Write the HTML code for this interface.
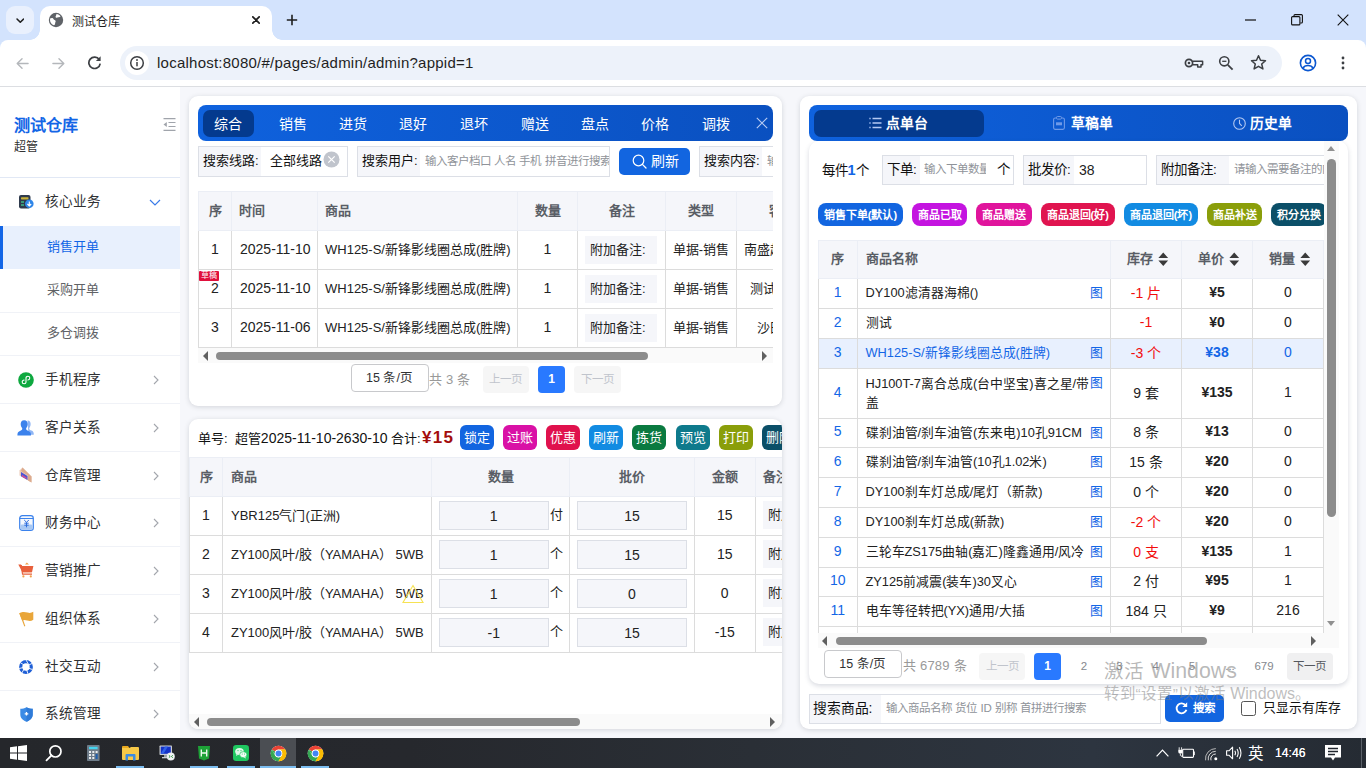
<!DOCTYPE html>
<html lang="zh-CN">
<head>
<meta charset="utf-8">
<title>测试仓库</title>
<style>
*{box-sizing:border-box;margin:0;padding:0}
html,body{width:1366px;height:768px;overflow:hidden}
body{font-family:"Liberation Sans",sans-serif;font-size:14px;color:#222;background:#f6f7fb;position:relative}
.abs{position:absolute}
svg{display:block}
/* ---------- browser chrome ---------- */
#tabstrip{position:absolute;left:0;top:0;width:1366px;height:50px;background:#d3e3fd}
#tabsearch{position:absolute;left:6px;top:6px;width:28px;height:28px;border-radius:9px;background:#e9f0fd}
#tab{position:absolute;left:40px;top:6px;width:232px;height:34px;background:#fff;border-radius:10px 10px 0 0}
#tab:before,#tab:after{content:"";position:absolute;bottom:0;width:10px;height:10px;background:radial-gradient(circle at 0 0,rgba(255,255,255,0) 9.5px,#fff 10px)}
#tab:before{left:-10px}
#tab:after{right:-10px;background:radial-gradient(circle at 100% 0,rgba(255,255,255,0) 9.5px,#fff 10px)}
#tabtitle{position:absolute;left:72px;top:13.500px;font-size:12px;color:#1f1f1f;line-height:16px;white-space:nowrap}
#toolbar{position:absolute;left:0;top:40px;width:1366px;height:47px;background:#fff;border-bottom:1px solid #dcdee2;border-radius:8px 8px 0 0}
#omni{position:absolute;left:120px;top:46px;width:1162px;height:34px;border-radius:17px;background:#edf2fa}
#omniicon{position:absolute;left:124.800px;top:51px;width:24px;height:24px;border-radius:12px;background:#fff}
#url{position:absolute;left:157px;top:53px;font-size:15px;color:#1f1f1f;line-height:20px;white-space:nowrap;letter-spacing:0.240px}
/* ---------- sidebar ---------- */
#side{position:absolute;left:0;top:87px;width:180px;height:651px;background:#fff}
#side .logo{position:absolute;left:14px;top:28px;font-size:16.100px;font-weight:bold;color:#1366e6;line-height:20px;white-space:nowrap}
#side .sub{position:absolute;left:14px;top:53px;font-size:12px;color:#333;line-height:14px}
#side .hr{position:absolute;left:0;width:180px;height:1px;background:#f0f2f7}
.mi{position:absolute;left:45px;font-size:13.600px;color:#303133;line-height:20px;white-space:nowrap}
.smi{position:absolute;left:47px;font-size:13px;color:#606266;line-height:20px;white-space:nowrap}
.chev{position:absolute;left:152px;width:8px;height:10px}
/* ---------- panels ---------- */
.panel{position:absolute;background:#fff;border-radius:9px;box-shadow:0 1px 5px rgba(40,45,60,.17)}
.bluebar{position:absolute;height:36px;border-radius:8px;background:linear-gradient(90deg,#0f62de,#0a50c0)}
.tabact{position:absolute;top:5px;height:27px;border-radius:7px;background:#043a8e}
.tl{position:absolute;top:0;height:36px;line-height:38.500px;font-size:14px;color:#fff;white-space:nowrap;transform:translateX(-50%)}

/* ---------- generic widgets ---------- */
.sbox{position:absolute;height:31px;border:1px solid #dcdfe6;background:#fff;overflow:hidden;white-space:nowrap}
.sbox .lb{position:absolute;left:0;top:0;height:29px;background:#f5f6fa;font-size:13px;color:#111;line-height:28px;padding-left:4px}
.sbox .ph{position:absolute;top:0;height:29px;line-height:28px;font-size:11.500px;color:#8f9399}
.btn{position:absolute;border-radius:5px;background:#1265e0;color:#fff;white-space:nowrap}
table{border-collapse:collapse;table-layout:fixed}
.tb{position:absolute;overflow:hidden}
.tb td,.tb th{border:1px solid #dcdcdc;font-weight:normal;white-space:nowrap;overflow:hidden;padding:0 0 3px 0}
.n{font-size:14px}
.tb th{background:#f5f6fa;color:#5a5e66;font-weight:bold;border-color:#ebeef5}
.hsb{position:absolute;height:15px;background:#fafafa}
.hsb i{position:absolute;top:3.500px;height:8.500px;border-radius:4.500px;background:#8c8c8c}
.hsb b{position:absolute;top:2.500px;width:0;height:0;border:5px solid transparent}
.hsb b.l{border-right:5px solid #606060;border-left:0}
.hsb b.r{border-left:5px solid #606060;border-right:0}
.pg{position:absolute;height:27px;line-height:27px;border-radius:4px;text-align:center;font-size:11.500px;white-space:nowrap}
.pg.dis{background:#f6f6f6;color:#c0c4cc}
.pg.on{background:#2979ff;color:#fff;font-weight:bold;font-size:12px}
.pgsel{position:absolute;height:28px;line-height:26px;border:1px solid #c8c9cc;border-radius:4px;background:#fff;text-align:center;font-size:12.500px;color:#303133;white-space:nowrap}
.pgtot{position:absolute;font-size:13px;color:#999;line-height:20px;white-space:nowrap;letter-spacing:0.200px}
.note{display:block;background:#f5f6fa;color:#222}

.ab{position:absolute;top:6px;width:34px;height:24.500px;border-radius:6px;color:#fff;font-size:13px;line-height:26px;text-align:center;white-space:nowrap}
.inp{display:block;height:29px;line-height:28px;border:1px solid #dcdfe6;background:#f5f6fa;text-align:center;font-size:14px;color:#222}

.pill{position:absolute;top:107px;height:23px;border-radius:8px;color:#fff;font-size:11px;font-weight:bold;line-height:25.500px;text-align:center;white-space:nowrap;overflow:hidden}
#gt td{height:30px;padding-bottom:4px}
#gt .nm{font-size:12.800px}
#gt tr.s td{height:29px}
#gt .c{text-align:center}
#gt .no{text-align:center;color:#1366e6;font-size:14px}
#gt .pr{text-align:center;font-weight:bold;font-size:14px}
#gt .nm{padding-left:8px;position:relative;white-space:normal}
#gt .nm u{position:absolute;right:7px;top:6px;text-decoration:none;color:#1366e6;line-height:16px}
#gt .red{color:#f20d0d}
#gt tr.hl td{background:#e8f0fe}
#gt tr.hl .nm,#gt tr.hl .pr,#gt tr.hl .sl{color:#1366e6}
.car{display:inline-block;vertical-align:middle;margin-left:5px;margin-top:-1px}
#gt th{padding-bottom:4px}
#gt th+th+th{padding-left:4px}
.pnum{position:absolute;top:557px;height:27px;line-height:27px;font-size:11.500px;color:#85888e;transform:translateX(-50%)}
/* ---------- taskbar ---------- */
#taskbar{position:absolute;left:0;top:738px;width:1366px;height:30px;background:linear-gradient(90deg,#25272b 0%,#26282d 30%,#2a2f36 55%,#2d3540 80%,#252b33 100%)}
</style>
</head>
<body>
<!-- ===== Browser chrome ===== -->
<div id="tabstrip"></div>
<div id="tabsearch"><svg class="abs" style="left:9.700px;top:11.500px" width="8.600" height="6" viewBox="0 0 10 7"><path d="M1.2 1.2 L5 5 L8.8 1.2" fill="none" stroke="#1f1f1f" stroke-width="1.8" stroke-linecap="round" stroke-linejoin="round"/></svg></div>
<div id="tab"></div>
<svg class="abs" style="left:48px;top:12px" width="16" height="16" viewBox="0 0 16 16"><circle cx="8" cy="8" r="7.200" fill="#5f6368"/><path d="M3.2 6.2c1.2-.3 2 .2 2.4 1.1.5.9 1.6.6 2 1.6.3 1-.6 1.4-.5 2.6.1.8-.4 1.6-1.2 1.8C3.6 12.4 2 10.400 2 8c0-.6.1-1.200.3-1.800zM8.500 2c1.700.1 3.200 1 4.100 2.300-.5.8-1.300 1-2.100.9-.9-.1-1.300.7-2.200.5-.8-.2-.9-1.100-.5-1.700.4-.6.500-1.200.7-2z" fill="#fff"/></svg>
<div id="tabtitle">测试仓库</div>
<svg class="abs" style="left:252px;top:16px" width="8" height="8" viewBox="0 0 8 8"><path d="M0.800 0.800 L7.200 7.200 M7.200 0.800 L0.800 7.200" stroke="#1f1f1f" stroke-width="1.700" stroke-linecap="round"/></svg>
<svg class="abs" style="left:286px;top:14px" width="12" height="12" viewBox="0 0 12 12"><path d="M6 0.800 V11.200 M0.800 6 H11.200" stroke="#1f1f1f" stroke-width="1.6"/></svg>
<!-- window controls -->
<svg class="abs" style="left:1245px;top:19px" width="11" height="2" viewBox="0 0 11 2"><rect width="11" height="1.200" y="0.400" fill="#111"/></svg>
<svg class="abs" style="left:1291px;top:14px" width="12" height="12" viewBox="0 0 12 12"><rect x="0.600" y="2.600" width="8.300" height="8.300" rx="1" fill="none" stroke="#111" stroke-width="1.100"/><path d="M3 2.500 V1.600 A1 1 0 0 1 4 0.600 H10.400 A1 1 0 0 1 11.400 1.600 V8 A1 1 0 0 1 10.400 9 H9.300" fill="none" stroke="#111" stroke-width="1.100"/></svg>
<svg class="abs" style="left:1337px;top:14px" width="12" height="12" viewBox="0 0 12 12"><path d="M0.700 0.700 L11.300 11.300 M11.300 0.700 L0.700 11.300" stroke="#111" stroke-width="1.100"/></svg>

<div id="toolbar"></div>
<svg class="abs" style="left:16px;top:56.500px" width="13" height="13" viewBox="0 0 14 14"><path d="M13 7 H1.500 M6.500 1.800 L1.300 7 L6.500 12.200" fill="none" stroke="#b4b7bb" stroke-width="1.500" stroke-linecap="round" stroke-linejoin="round"/></svg>
<svg class="abs" style="left:51.500px;top:56.500px" width="13" height="13" viewBox="0 0 14 14"><path d="M1 7 H12.500 M7.500 1.800 L12.700 7 L7.500 12.200" fill="none" stroke="#b4b7bb" stroke-width="1.500" stroke-linecap="round" stroke-linejoin="round"/></svg>
<svg class="abs" style="left:87px;top:55px" width="15" height="15" viewBox="0 0 15 15"><path d="M12.300 4.600 A5.700 5.700 0 1 0 13.200 8.600" fill="none" stroke="#3c3f43" stroke-width="1.700"/><path d="M13.600 1.300 V6 H8.900 Z" fill="#3c3f43"/></svg>
<div id="omni"></div>
<div id="omniicon"><svg class="abs" style="left:4px;top:4px" width="16" height="16" viewBox="0 0 16 16"><circle cx="8" cy="8" r="6.300" fill="none" stroke="#3c3f43" stroke-width="1.500"/><rect x="7.250" y="7" width="1.500" height="4.300" fill="#3c3f43"/><circle cx="8" cy="5" r="0.950" fill="#3c3f43"/></svg></div>
<div id="url">localhost:8080/#/pages/admin/admin?appid=1</div>
<!-- right toolbar icons -->
<svg class="abs" style="left:1184px;top:56px" width="20" height="14" viewBox="0 0 20 14"><circle cx="5" cy="7" r="3.600" fill="none" stroke="#3c3f43" stroke-width="1.700"/><path d="M8.500 5.200 H18.600 V8.800 H17 V11 H13.700 V8.800 H8.500" fill="none" stroke="#3c3f43" stroke-width="1.500" stroke-linejoin="round"/><circle cx="5" cy="7" r="1.300" fill="#3c3f43"/></svg>
<svg class="abs" style="left:1218px;top:55px" width="16" height="16" viewBox="0 0 16 16"><circle cx="6.300" cy="6.300" r="4.600" fill="none" stroke="#3c3f43" stroke-width="1.600"/><path d="M9.800 9.800 L14.600 14.600" stroke="#3c3f43" stroke-width="1.800"/><path d="M4.200 6.300 H8.400" stroke="#3c3f43" stroke-width="1.300"/></svg>
<svg class="abs" style="left:1250px;top:54px" width="17" height="17" viewBox="0 0 17 17"><path d="M8.500 1.700 L10.500 6.300 L15.500 6.700 L11.700 10 L12.900 14.900 L8.500 12.300 L4.100 14.900 L5.300 10 L1.500 6.700 L6.500 6.300 Z" fill="none" stroke="#3c3f43" stroke-width="1.500" stroke-linejoin="round"/></svg>
<svg class="abs" style="left:1299px;top:54px" width="18" height="18" viewBox="0 0 18 18"><circle cx="9" cy="9" r="7.600" fill="none" stroke="#0b57d0" stroke-width="1.600"/><circle cx="9" cy="7" r="2.500" fill="none" stroke="#0b57d0" stroke-width="1.500"/><path d="M3.900 14.400 C5 12.200 7 11.600 9 11.600 C11 11.600 13 12.200 14.100 14.400" fill="none" stroke="#0b57d0" stroke-width="1.500"/></svg>
<svg class="abs" style="left:1341px;top:56px" width="4" height="14" viewBox="0 0 4 14"><circle cx="2" cy="2" r="1.400" fill="#3c3f43"/><circle cx="2" cy="7" r="1.400" fill="#3c3f43"/><circle cx="2" cy="12" r="1.400" fill="#3c3f43"/></svg>

<!-- ===== Sidebar ===== -->
<div id="side">
  <div class="logo">测试仓库</div>
  <div class="sub">超管</div>
  <svg class="abs" style="left:163px;top:31px" width="13" height="13" viewBox="0 0 13 13"><path d="M0.500 0.600 H12.500 M5.500 4.500 H12.500 M5.500 8.500 H12.500 M0.500 12.400 H12.500" stroke="#a0a4ab" stroke-width="1.100"/><path d="M0.500 6.500 L3.800 4 V9 Z" fill="#a0a4ab"/></svg>
  <div class="hr" style="top:90px;background:#e1e8f5"></div>
  <!-- active sub item -->
  <div class="abs" style="left:0;top:139px;width:180px;height:43px;background:#e8f0fd"></div>
  <div class="abs" style="left:0;top:139px;width:3px;height:43px;background:#1366e6"></div>
  <div class="hr" style="top:225px"></div>
  <div class="hr" style="top:268px"></div>
  <div class="hr" style="top:316px"></div>
  <div class="hr" style="top:364px"></div>
  <div class="hr" style="top:411px"></div>
  <div class="hr" style="top:459px"></div>
  <div class="hr" style="top:507px"></div>
  <div class="hr" style="top:555px"></div>
  <div class="hr" style="top:603px"></div>
  <!-- menu items (top = centerY-87-10) -->
  <div class="mi" style="top:105px">核心业务</div>
  <div class="smi" style="top:150px;color:#1366e6">销售开单</div>
  <div class="smi" style="top:193px">采购开单</div>
  <div class="smi" style="top:236px">多仓调拨</div>
  <div class="mi" style="top:282.500px">手机程序</div>
  <div class="mi" style="top:330.500px">客户关系</div>
  <div class="mi" style="top:378.500px">仓库管理</div>
  <div class="mi" style="top:426px">财务中心</div>
  <div class="mi" style="top:474px">营销推广</div>
  <div class="mi" style="top:521.500px">组织体系</div>
  <div class="mi" style="top:569.500px">社交互动</div>
  <div class="mi" style="top:617px">系统管理</div>
  <!-- chevrons -->
  <svg class="abs" style="left:149px;top:112px" width="12" height="7" viewBox="0 0 12 7"><path d="M1 1 L6 6 L11 1" fill="none" stroke="#3b7be8" stroke-width="1.200"/></svg>
  <svg class="chev" style="top:287.500px" viewBox="0 0 8 10"><path d="M2 1 L6 5 L2 9" fill="none" stroke="#a3a6ad" stroke-width="1.100"/></svg>
  <svg class="chev" style="top:335.500px" viewBox="0 0 8 10"><path d="M2 1 L6 5 L2 9" fill="none" stroke="#a3a6ad" stroke-width="1.100"/></svg>
  <svg class="chev" style="top:383.500px" viewBox="0 0 8 10"><path d="M2 1 L6 5 L2 9" fill="none" stroke="#a3a6ad" stroke-width="1.100"/></svg>
  <svg class="chev" style="top:431px" viewBox="0 0 8 10"><path d="M2 1 L6 5 L2 9" fill="none" stroke="#a3a6ad" stroke-width="1.100"/></svg>
  <svg class="chev" style="top:479px" viewBox="0 0 8 10"><path d="M2 1 L6 5 L2 9" fill="none" stroke="#a3a6ad" stroke-width="1.100"/></svg>
  <svg class="chev" style="top:526.500px" viewBox="0 0 8 10"><path d="M2 1 L6 5 L2 9" fill="none" stroke="#a3a6ad" stroke-width="1.100"/></svg>
  <svg class="chev" style="top:574.500px" viewBox="0 0 8 10"><path d="M2 1 L6 5 L2 9" fill="none" stroke="#a3a6ad" stroke-width="1.100"/></svg>
  <svg class="chev" style="top:622px" viewBox="0 0 8 10"><path d="M2 1 L6 5 L2 9" fill="none" stroke="#a3a6ad" stroke-width="1.100"/></svg>
  <!-- icons -->
  <!-- core business -->
  <svg class="abs" style="left:19px;top:108px" width="15" height="14" viewBox="0 0 15 14"><rect x="0" y="0" width="11.500" height="13.500" rx="2" fill="#2f3a4d"/><rect x="2" y="2.200" width="7.500" height="2.200" rx="0.600" fill="#c9b23a"/><rect x="2" y="6.300" width="3" height="1.400" fill="#3ec28a"/><rect x="2" y="9.300" width="3" height="1.400" fill="#3ec28a"/><circle cx="10.300" cy="8.800" r="4.300" fill="#2f86e8"/><path d="M10.300 6.500 V10.600 M8.400 9 L10.300 10.900 L12.200 9" fill="none" stroke="#fff" stroke-width="1.100"/></svg>
  <!-- mini program -->
  <svg class="abs" style="left:18px;top:285px" width="16" height="16" viewBox="0 0 16 16"><circle cx="8" cy="8" r="7.800" fill="#0ea83f"/><path d="M8 10.300 V6.100 A1.900 1.900 0 1 1 9.900 8 M8 5.700 V9.900 A1.900 1.900 0 1 1 6.100 8" fill="none" stroke="#fff" stroke-width="1.100" stroke-linecap="round"/></svg>
  <!-- customers -->
  <svg class="abs" style="left:17px;top:333px" width="17" height="16" viewBox="0 0 17 16"><path d="M10.500 0.500 C13 0.500 13.800 2.500 13.600 4.600 C13.500 6.200 12.800 7.400 12.200 8.200 C12.200 9.600 13 10 14.500 10.600 C16.200 11.300 16.800 12.300 16.800 14.800 H11.500 Z" fill="#8fb6f5"/><path d="M7.200 0.300 C9.800 0.300 10.900 2.300 10.700 4.600 C10.600 6.400 9.800 7.600 9.100 8.400 C9.100 9.900 10 10.300 11.500 10.900 C13.400 11.700 14 12.600 14 15.500 H0.400 C0.400 12.600 1 11.700 2.900 10.900 C4.400 10.300 5.300 9.900 5.300 8.400 C4.600 7.600 3.800 6.400 3.700 4.600 C3.500 2.300 4.600 0.300 7.200 0.300 Z" fill="#3b82ec"/></svg>
  <!-- warehouse -->
  <svg class="abs" style="left:19px;top:380px" width="13" height="16" viewBox="0 0 13 16"><path d="M0.500 3.500 L3.500 0.500 L12.500 9.500 V15.500 L0.500 8.500 Z" fill="#eccab5"/><path d="M3.500 0.500 L12.500 9.500 V15.500 L9 13.500 V8.500 L2 4 Z" fill="#dcab8e"/><path d="M2 5 L8.500 9 V13 L2 9.300 Z" fill="#4a55d6"/><path d="M3 7.800 L7.500 10.400 V12 L3 9.400 Z" fill="#d84c8c"/></svg>
  <!-- finance -->
  <svg class="abs" style="left:18.500px;top:428px" width="15" height="16" viewBox="0 0 15 16"><rect x="0.700" y="0.700" width="13.600" height="14.600" rx="2.600" fill="#f4f8fe" stroke="#3b82ec" stroke-width="1.200"/><path d="M0.700 3.500 H14.300" stroke="#3b82ec" stroke-width="1"/><rect x="1.300" y="9.500" width="12.400" height="5.200" rx="1.500" fill="#a8c8f3"/><path d="M5.200 5 L7.500 7.300 L9.800 5 M7.500 7.300 V12.300 M5.300 8.200 H9.700 M5.300 10.200 H9.700" fill="none" stroke="#2f6fdd" stroke-width="1"/></svg>
  <!-- cart -->
  <svg class="abs" style="left:18px;top:475px" width="16" height="16" viewBox="0 0 16 16"><path d="M7 2.500 L8.800 0.600 L11 2.500 Z" fill="#f1a04a"/><path d="M0.300 2.600 H3 L3.800 4 H15.400 L14 10.200 H4.400 Z" fill="#e8603c"/><path d="M3.200 3 L4.600 12.200 H14" fill="none" stroke="#e8603c" stroke-width="1.300"/><path d="M4.800 10.700 H13.600" stroke="#f6b9a2" stroke-width="1.200"/><circle cx="5.400" cy="14.400" r="1.100" fill="#f1a04a"/><circle cx="12.800" cy="14.400" r="1.100" fill="#f1a04a"/></svg>
  <!-- flag -->
  <svg class="abs" style="left:19px;top:524px" width="15" height="16" viewBox="0 0 15 16"><path d="M0.300 2.300 C3.500 0.300 6 0.800 8.500 1.600 C10.800 2.300 12.600 1.900 14.300 0.800 V8.800 C12.300 10.200 10.400 10.200 8.300 9.500 C6.200 8.800 4.500 8.800 3.200 9.600 Z" fill="#e9a63a"/><path d="M0.300 2.300 L1.600 1.800 L6.300 15 L5.300 15.400 Z" fill="#e9a63a"/></svg>
  <!-- social -->
  <svg class="abs" style="left:19px;top:572.500px" width="14" height="14" viewBox="0 0 14 14"><circle cx="7" cy="7" r="5.300" fill="none" stroke="#1f5fd6" stroke-width="3.200"/><g stroke="#fff" stroke-width="0.900"><path d="M7 0 L9.500 4.300"/><path d="M13 3.500 L8.900 5.400"/><path d="M13.500 9.500 L9.300 8.200"/><path d="M9 13.800 L7.500 9.600"/><path d="M2.800 13 L5 9.200"/><path d="M0.200 8.500 L4.400 7.500"/><path d="M1.500 2.800 L5.300 5.100"/></g></svg>
  <!-- shield -->
  <svg class="abs" style="left:19.500px;top:620px" width="13" height="15" viewBox="0 0 13 15"><path d="M6.500 0.300 C8.500 1.400 10.500 1.800 12.700 1.800 V7.500 C12.700 11 10 13.500 6.500 14.700 C3 13.500 0.300 11 0.300 7.500 V1.800 C2.500 1.800 4.500 1.400 6.500 0.300 Z" fill="#3b8be6"/><path d="M6.500 0.300 C8.500 1.400 10.500 1.800 12.700 1.800 V7.500 C12.700 11 10 13.500 6.500 14.700 Z" fill="#2f7bd8"/><path d="M6.500 5 V8.600 M4.700 6.800 H8.300" stroke="#fff" stroke-width="1.300"/></svg>
</div>

<!-- ===== Panels ===== -->
<div class="panel" id="p1" style="left:189px;top:96px;width:593px;height:310px">
  <div class="bluebar" style="left:9px;top:9px;width:575px">
    <div class="tabact" style="left:5px;width:51px"></div>
    <div class="tl" style="left:30px">综合</div>
    <div class="tl" style="left:94.500px">销售</div>
    <div class="tl" style="left:155px">进货</div>
    <div class="tl" style="left:215px">退好</div>
    <div class="tl" style="left:275.500px">退坏</div>
    <div class="tl" style="left:336.500px">赠送</div>
    <div class="tl" style="left:397px">盘点</div>
    <div class="tl" style="left:457px">价格</div>
    <div class="tl" style="left:517.500px">调拨</div>
    <svg class="abs" style="left:558px;top:12px" width="12" height="12" viewBox="0 0 12 12"><path d="M0.800 0.800 L11.200 11.200 M11.200 0.800 L0.800 11.200" stroke="#b9ccf3" stroke-width="1.100"/></svg>
  </div>
  <!-- search row -->
  <div class="abs" style="left:9px;top:50px;width:575px;height:32px;overflow:hidden">
    <div class="sbox" style="left:0;top:0;width:150px"><div class="lb" style="width:62px">搜索线路:</div><div class="abs" style="left:71px;top:0;line-height:28px;font-size:13px;color:#111">全部线路</div>
      <svg class="abs" style="left:124px;top:4px" width="17" height="17" viewBox="0 0 17 17"><circle cx="8.500" cy="8.500" r="8" fill="#c0c4cc"/><path d="M5.300 5.300 L11.700 11.700 M11.700 5.300 L5.300 11.700" stroke="#fff" stroke-width="1.200"/></svg></div>
    <div class="sbox" style="left:159px;top:0;width:253px"><div class="lb" style="width:62px">搜索用户:</div><div class="ph" style="left:67px">输入客户档口 人名 手机 拼音进行搜索</div></div>
    <div class="btn" style="left:421px;top:2px;width:71px;height:27px"><svg class="abs" style="left:13px;top:6px" width="15" height="15" viewBox="0 0 15 15"><circle cx="6.500" cy="6.500" r="5.300" fill="none" stroke="#fff" stroke-width="1.200"/><path d="M10.400 10.400 L14 14" stroke="#fff" stroke-width="1.300" stroke-linecap="round"/></svg><div class="abs" style="left:32px;top:0;line-height:27px;font-size:14px">刷新</div></div>
    <div class="sbox" style="left:501px;top:0;width:200px"><div class="lb" style="width:62px">搜索内容:</div><div class="ph" style="left:67px">输入搜索内容</div></div>
  </div>
  <!-- table -->
  <div class="tb" style="left:9px;top:95px;width:575px;height:157px">
  <table style="width:700px;font-size:13px;color:#222">
    <colgroup><col style="width:33px"><col style="width:86px"><col style="width:200px"><col style="width:60px"><col style="width:88px"><col style="width:71px"><col style="width:161.500px"></colgroup>
    <tr style="height:39px"><th>序</th><th style="text-align:left;padding-left:7px">时间</th><th style="text-align:left;padding-left:7px">商品</th><th>数量</th><th>备注</th><th>类型</th><th style="text-align:left;padding-left:32px">客户</th></tr>
    <tr style="height:39px"><td class="n" style="text-align:center">1</td><td class="n" style="padding-left:8px">2025-11-10</td><td style="padding-left:7px">WH125-S/新锋影线圈总成(胜牌)</td><td class="n" style="text-align:center">1</td><td style="padding:0 8px 0 7px"><span class="note" style="height:28px;line-height:27px;padding-left:5px;margin-top:0">附加备注:</span></td><td style="text-align:center">单据-销售</td><td style="padding-left:7px">南盛超市</td></tr>
    <tr style="height:39px"><td class="n" style="text-align:center">2</td><td class="n" style="padding-left:8px">2025-11-10</td><td style="padding-left:7px">WH125-S/新锋影线圈总成(胜牌)</td><td class="n" style="text-align:center">1</td><td style="padding:0 8px 0 7px"><span class="note" style="height:28px;line-height:27px;padding-left:5px;margin-top:0">附加备注:</span></td><td style="text-align:center">单据-销售</td><td style="padding-left:13px">测试客户</td></tr>
    <tr style="height:39px"><td class="n" style="text-align:center">3</td><td class="n" style="padding-left:8px">2025-11-06</td><td style="padding-left:7px">WH125-S/新锋影线圈总成(胜牌)</td><td class="n" style="text-align:center">1</td><td style="padding:0 8px 0 7px"><span class="note" style="height:28px;line-height:27px;padding-left:5px;margin-top:0">附加备注:</span></td><td style="text-align:center">单据-销售</td><td style="padding-left:20px">沙田客户</td></tr>
  </table>
  </div>
  <div class="abs" style="left:10px;top:175px;width:20px;height:10px;background:#e0103c;color:#fff;font-size:8px;line-height:10px;text-align:center;border-radius:1px;overflow:hidden">草稿</div>
  <div class="hsb" style="left:9px;top:252px;width:575px"><b class="l" style="left:5px"></b><i style="left:17.500px;width:432px"></i><b class="r" style="left:564px"></b></div>
  <!-- pagination -->
  <div class="pgsel" style="left:161.500px;top:268px;width:78px">15 条/页</div>
  <div class="pgtot" style="left:240px;top:274px">共 3 条</div>
  <div class="pg dis" style="left:293.500px;top:270px;width:46.500px">上一页</div>
  <div class="pg on" style="left:349px;top:270px;width:27px">1</div>
  <div class="pg dis" style="left:385px;top:270px;width:46.500px">下一页</div>
</div>
<div class="panel" id="p2" style="left:189px;top:419px;width:593px;height:310px;overflow:hidden">
  <div class="abs" style="left:9px;top:9px;font-size:13px;line-height:20px;color:#111;white-space:nowrap">单号:&nbsp; 超管<span class="n">2025-11-10-2630-10</span> 合计:</div>
  <div class="abs" style="left:233px;top:7px;font-size:17px;line-height:24px;font-weight:bold;color:#a30d0d;white-space:nowrap;letter-spacing:1.300px">¥15</div>
  <div class="ab" style="left:271px;background:#1265e0">锁定</div>
  <div class="ab" style="left:314px;background:#d911a6">过账</div>
  <div class="ab" style="left:357px;background:#e0114d">优惠</div>
  <div class="ab" style="left:400px;background:#128be2">刷新</div>
  <div class="ab" style="left:443px;background:#0a7a40">拣货</div>
  <div class="ab" style="left:487px;background:#0e7a8c">预览</div>
  <div class="ab" style="left:530px;background:#8a9e0a">打印</div>
  <div class="ab" style="left:573px;background:#0b4f68">删除</div>
  <div class="tb" style="left:0;top:38px;width:593px;height:200px">
  <table style="width:720px;font-size:13px;color:#222">
    <colgroup><col style="width:33px"><col style="width:209px"><col style="width:138px"><col style="width:125px"><col style="width:60.500px"><col style="width:154.500px"></colgroup>
    <tr style="height:39px"><th>序</th><th style="text-align:left;padding-left:8px">商品</th><th>数量</th><th>批价</th><th>金额</th><th style="text-align:left;padding-left:7px">备注</th></tr>
    <tr style="height:39px"><td class="n" style="text-align:center">1</td><td style="padding-left:8px">YBR125气门(正洲)</td><td style="padding:0 0 2px 7px"><span class="inp" style="width:109.500px;float:left">1</span><span style="float:left;line-height:27px;margin-left:1px">付</span></td><td style="padding:0 7px 2px 7px"><span class="inp">15</span></td><td class="n" style="text-align:center">15</td><td style="padding:0 0 2px 7px"><span class="note" style="height:28.500px;line-height:27px;padding-left:5px">附加备注:</span></td></tr>
    <tr style="height:39px"><td class="n" style="text-align:center">2</td><td style="padding-left:8px">ZY100风叶/胶（YAMAHA） 5WB</td><td style="padding:0 0 2px 7px"><span class="inp" style="width:109.500px;float:left">1</span><span style="float:left;line-height:27px;margin-left:1px">个</span></td><td style="padding:0 7px 2px 7px"><span class="inp">15</span></td><td class="n" style="text-align:center">15</td><td style="padding:0 0 2px 7px"><span class="note" style="height:28.500px;line-height:27px;padding-left:5px">附加备注:</span></td></tr>
    <tr style="height:39px"><td class="n" style="text-align:center">3</td><td style="padding-left:8px">ZY100风叶/胶（YAMAHA） 5WB</td><td style="padding:0 0 2px 7px"><span class="inp" style="width:109.500px;float:left">1</span><span style="float:left;line-height:27px;margin-left:1px">个</span></td><td style="padding:0 7px 2px 7px"><span class="inp">0</span></td><td class="n" style="text-align:center">0</td><td style="padding:0 0 2px 7px"><span class="note" style="height:28.500px;line-height:27px;padding-left:5px">附加备注:</span></td></tr>
    <tr style="height:39px"><td class="n" style="text-align:center">4</td><td style="padding-left:8px">ZY100风叶/胶（YAMAHA） 5WB</td><td style="padding:0 0 2px 7px"><span class="inp" style="width:109.500px;float:left">-1</span><span style="float:left;line-height:27px;margin-left:1px">个</span></td><td style="padding:0 7px 2px 7px"><span class="inp">15</span></td><td class="n" style="text-align:center">-15</td><td style="padding:0 0 2px 7px"><span class="note" style="height:28.500px;line-height:27px;padding-left:5px">附加备注:</span></td></tr>
  </table>
  </div>
  <svg class="abs" style="left:212px;top:165px" width="24" height="20" viewBox="0 0 24 20"><path d="M12 1.500 L22 18.500 H2 Z" fill="none" stroke="#f5e04a" stroke-width="1.100" opacity="0.95"/></svg>
  <div class="hsb" style="left:0;top:295px;width:593px"><b class="l" style="left:5px"></b><i style="left:18px;width:373px"></i><b class="r" style="left:581px"></b></div>
</div>
<div class="panel" id="p3" style="left:800px;top:96px;width:557px;height:633px">
  <div class="bluebar" style="left:9px;top:9px;width:539px">
    <div class="tabact" style="left:5px;width:170px"></div>
    <svg class="abs" style="left:60px;top:12px" width="13" height="12" viewBox="0 0 13 12"><path d="M3.500 1.500 H12.500 M3.500 6 H12.500 M3.500 10.500 H12.500" stroke="#b4c9f3" stroke-width="1.300"/><path d="M0.300 1.500 H1.700 M0.300 6 H1.700 M0.300 10.500 H1.700" stroke="#9dbbf0" stroke-width="1.300"/></svg>
    <div class="tl" style="left:77px;transform:none;font-weight:bold;font-size:13.800px">点单台</div>
    <svg class="abs" style="left:244px;top:11px" width="12" height="14" viewBox="0 0 12 14"><rect x="0.600" y="2" width="10.800" height="11.400" rx="1.600" fill="none" stroke="#6f9ae8" stroke-width="1.100"/><rect x="3.600" y="0.500" width="4.800" height="2.600" rx="0.800" fill="#0d58cc" stroke="#6f9ae8" stroke-width="1"/><rect x="3" y="6.300" width="6" height="3" fill="#6f9ae8"/></svg>
    <div class="tl" style="left:261.500px;transform:none;font-weight:bold;font-size:13.800px">草稿单</div>
    <svg class="abs" style="left:423.500px;top:11.500px" width="13" height="13" viewBox="0 0 13 13"><circle cx="6.500" cy="6.500" r="5.800" fill="none" stroke="#b3c8f2" stroke-width="1.100"/><path d="M6.500 2.800 V6.500 L8.800 8.800" fill="none" stroke="#b3c8f2" stroke-width="1.100"/></svg>
    <div class="tl" style="left:440.500px;transform:none;font-weight:bold;font-size:13.800px">历史单</div>
  </div>
  <!-- inner card -->
  <div class="abs" style="left:9px;top:45px;width:539px;height:543px;background:#fff;border-radius:10px;box-shadow:0 2px 5px rgba(60,70,100,.2)"></div>
  <!-- scroll viewport (content clipped at x=524) -->
  <div class="abs" style="left:18px;top:45px;width:506px;height:492px;overflow:hidden">
    <div class="abs" style="left:3.500px;top:18.500px;font-size:13.500px;line-height:20px;color:#111;white-space:nowrap">每件<b style="color:#1366e6;font-size:14.500px">1</b>个</div>
    <div class="sbox" style="left:64px;top:14px;width:132px;height:30px"><div class="lb" style="width:37px;font-size:13.500px;height:28px;line-height:27px">下单:</div><div class="ph" style="left:41px;width:62px;overflow:hidden;line-height:27px">输入下单数量</div><div class="abs" style="left:114px;top:0;line-height:27px;font-size:13.500px;color:#111">个</div></div>
    <div class="sbox" style="left:205px;top:14px;width:124px;height:30px"><div class="lb" style="width:50px;font-size:13.500px;height:28px;line-height:27px">批发价:</div><div class="abs" style="left:55px;top:0;line-height:28px;font-size:14px;color:#222">38</div></div>
    <div class="sbox" style="left:338px;top:14px;width:300px;height:30px"><div class="lb" style="width:72px;font-size:13.500px;height:28px;line-height:27px">附加备注:</div><div class="ph" style="left:76.500px;line-height:27px">请输入需要备注的内容</div></div>
    <div class="pill" style="top:62px;left:0;width:85px;background:#1265e0">销售下单(默认)</div>
    <div class="pill" style="top:62px;left:94px;width:55px;background:#c414e0">商品已取</div>
    <div class="pill" style="top:62px;left:158px;width:56px;background:#e0149c">商品赠送</div>
    <div class="pill" style="top:62px;left:222.500px;width:74.500px;background:#e0144f">商品退回(好)</div>
    <div class="pill" style="top:62px;left:306px;width:74px;background:#128be2">商品退回(坏)</div>
    <div class="pill" style="top:62px;left:389px;width:55px;background:#8a9e0a">商品补送</div>
    <div class="pill" style="top:62px;left:453px;width:56px;background:#0b4f68">积分兑换</div>
    <div class="tb" id="gt" style="left:0;top:99px;width:506px;height:393px">
    <table style="width:505px;font-size:13px;color:#222">
      <colgroup><col style="width:38.500px"><col style="width:253.500px"><col style="width:71px"><col style="width:71px"><col style="width:71px"></colgroup>
      <tr style="height:38px"><th>序</th><th style="text-align:left;padding-left:8px">商品名称</th><th>库存<svg class="car" width="10.500" height="14.500" viewBox="0 0 10 14"><path d="M5 0.500 L9.700 5.800 H0.300 Z M5 13.500 L9.700 8.200 H0.300 Z" fill="#3a3a3a"/></svg></th><th>单价<svg class="car" width="10.500" height="14.500" viewBox="0 0 10 14"><path d="M5 0.500 L9.700 5.800 H0.300 Z M5 13.500 L9.700 8.200 H0.300 Z" fill="#3a3a3a"/></svg></th><th>销量<svg class="car" width="10.500" height="14.500" viewBox="0 0 10 14"><path d="M5 0.500 L9.700 5.800 H0.300 Z M5 13.500 L9.700 8.200 H0.300 Z" fill="#3a3a3a"/></svg></th></tr>
      <tr><td class="no">1</td><td class="nm">DY100滤清器海棉()<u>图</u></td><td class="c n red">-1 片</td><td class="pr">¥5</td><td class="c n sl">0</td></tr>
      <tr><td class="no">2</td><td class="nm">测试</td><td class="c n red">-1</td><td class="pr">¥0</td><td class="c n sl">0</td></tr>
      <tr class="hl"><td class="no">3</td><td class="nm">WH125-S/新锋影线圈总成(胜牌)<u>图</u></td><td class="c n red">-3 个</td><td class="pr">¥38</td><td class="c n sl">0</td></tr>
      <tr style="height:50px"><td class="no">4</td><td class="nm">HJ100T-7离合总成(台中坚宝)喜之星/带<br>盖<u>图</u></td><td class="c n">9 套</td><td class="pr">¥135</td><td class="c n sl">1</td></tr>
      <tr class="s"><td class="no">5</td><td class="nm">碟刹油管/刹车油管(东来电)10孔91CM<u>图</u></td><td class="c n">8 条</td><td class="pr">¥13</td><td class="c n sl">0</td></tr>
      <tr><td class="no">6</td><td class="nm">碟刹油管/刹车油管(10孔1.02米)<u>图</u></td><td class="c n">15 条</td><td class="pr">¥20</td><td class="c n sl">0</td></tr>
      <tr><td class="no">7</td><td class="nm">DY100刹车灯总成/尾灯（新款)<u>图</u></td><td class="c n">0 个</td><td class="pr">¥20</td><td class="c n sl">0</td></tr>
      <tr><td class="no">8</td><td class="nm">DY100刹车灯总成(新款)<u>图</u></td><td class="c n red">-2 个</td><td class="pr">¥20</td><td class="c n sl">0</td></tr>
      <tr><td class="no">9</td><td class="nm">三轮车ZS175曲轴(嘉汇)隆鑫通用/风冷<u>图</u></td><td class="c n red">0 支</td><td class="pr">¥135</td><td class="c n sl">1</td></tr>
      <tr class="s"><td class="no">10</td><td class="nm">ZY125前减震(装车)30叉心<u>图</u></td><td class="c n">2 付</td><td class="pr">¥95</td><td class="c n sl">1</td></tr>
      <tr><td class="no">11</td><td class="nm">电车等径转把(YX)通用/大插<u>图</u></td><td class="c n">184 只</td><td class="pr">¥9</td><td class="c n sl">216</td></tr>
      <tr><td class="no">12</td><td class="nm">&nbsp;</td><td class="c n">&nbsp;</td><td class="pr">&nbsp;</td><td class="c n sl">&nbsp;</td></tr>
    </table>
    </div>
  </div>
  <!-- vertical scrollbar -->
  <div class="abs" style="left:524px;top:45px;width:14.500px;height:492px;background:#fafafa">
    <div class="abs" style="left:2.500px;top:4.500px;width:0;height:0;border:4.500px solid transparent;border-bottom:5px solid #909090;border-top:0"></div>
    <div class="abs" style="left:2.800px;top:18px;width:8.800px;height:358px;border-radius:4.500px;background:#8c8c8c"></div>
    <div class="abs" style="left:2.500px;top:480px;width:0;height:0;border:4.500px solid transparent;border-top:5px solid #909090;border-bottom:0"></div>
  </div>
  <div class="hsb" style="left:18px;top:537px;width:520.500px"><b class="l" style="left:4px"></b><i style="left:18px;width:371px"></i><b class="r" style="left:493px"></b></div>
  <!-- pagination -->
  <div class="pgsel" style="left:23.500px;top:554px;width:78.500px">15 条/页</div>
  <div class="pgtot" style="left:103px;top:560px">共 6789 条</div>
  <div class="pg dis" style="left:179px;top:557px;width:46px">上一页</div>
  <div class="pg on" style="left:234px;top:557px;width:27px">1</div>
  <div class="pnum" style="left:284px">2</div>
  <div class="pnum" style="left:319.500px">3</div>
  <div class="pnum" style="left:355.700px">4</div>
  <div class="pnum" style="left:392px">5</div>
  <div class="pnum" style="left:430px">...</div>
  <div class="pnum" style="left:464px">679</div>
  <div class="pg" style="left:486.500px;top:557px;width:46.500px;background:#f0f0f1;color:#55585e">下一页</div>
  <!-- bottom search -->
  <div class="sbox" style="left:8.500px;top:598px;width:352.500px;height:29.500px"><div class="lb" style="width:71px;font-size:13.800px;height:27.500px;line-height:27px;padding-left:3px">搜索商品:</div><div class="ph" style="left:76.500px;line-height:26px">输入商品名称 货位 ID 别称 首拼进行搜索</div></div>
  <div class="btn" style="left:365px;top:599px;width:59px;height:27px"><svg class="abs" style="left:10px;top:7px" width="13" height="13" viewBox="0 0 13 13"><path d="M10.600 3.300 A5 5 0 1 0 11.400 7.800" fill="none" stroke="#fff" stroke-width="1.900"/><path d="M12.200 0.200 V5 H7.400 Z" fill="#fff"/></svg><div class="abs" style="left:27.500px;top:0;line-height:26px;font-size:11.500px;font-weight:bold">搜索</div></div>
  <div class="abs" style="left:440.800px;top:604.500px;width:15px;height:15px;border:1px solid #555;border-radius:2.500px;background:#fff"></div>
  <div class="abs" style="left:463px;top:599.500px;font-size:12.800px;line-height:24px;color:#111;white-space:nowrap">只显示有库存</div>
</div>
<!-- windows watermark -->
<div class="abs" style="left:1103.500px;top:657px;font-size:19.500px;line-height:28px;color:rgba(125,125,125,.55);white-space:nowrap">激活 <span style="font-size:21.300px;margin-left:1.500px">Windows</span></div>
<div class="abs" style="left:1103.500px;top:683.500px;font-size:15.500px;line-height:20px;color:rgba(125,125,125,.5);white-space:nowrap">转到“设置”以激活 <span style="font-size:16px">Windows</span>。</div>

<!-- ===== Taskbar ===== -->
<div id="taskbar">
  <div class="abs" style="left:260px;top:0;width:36px;height:30px;background:#4b4e53"></div>
  <!-- underlines -->
  <div class="abs" style="left:116px;top:28px;width:28px;height:2px;background:#7cbdf0"></div>
  <div class="abs" style="left:190px;top:28px;width:28px;height:2px;background:#7cbdf0"></div>
  <div class="abs" style="left:227px;top:28px;width:28px;height:2px;background:#7cbdf0"></div>
  <div class="abs" style="left:260px;top:28px;width:36px;height:2px;background:#7cbdf0"></div>
  <div class="abs" style="left:301px;top:28px;width:28px;height:2px;background:#7cbdf0"></div>
  <!-- windows logo -->
  <svg class="abs" style="left:9.500px;top:7px" width="17" height="16" viewBox="0 0 17 16"><path d="M0 2.300 L7 1.300 V7.500 H0 Z M8 1.150 L17 0 V7.500 H8 Z M0 8.500 H7 V14.700 L0 13.700 Z M8 8.500 H17 V16 L8 14.850 Z" fill="#fff"/></svg>
  <!-- search -->
  <svg class="abs" style="left:45px;top:6px" width="19" height="18" viewBox="0 0 19 18"><circle cx="10.400" cy="7.400" r="5.600" fill="none" stroke="#fff" stroke-width="1.700"/><path d="M6.500 11.300 L1.500 16.300" stroke="#fff" stroke-width="1.800" stroke-linecap="round"/></svg>
  <!-- calculator -->
  <svg class="abs" style="left:86.500px;top:7px" width="13" height="16" viewBox="0 0 13 16"><rect x="0" y="0" width="12.600" height="16" rx="0.800" fill="#6e7c89"/><rect x="2" y="1.800" width="8.600" height="2.400" fill="#45d4f0"/><g fill="#e9edf0"><rect x="2" y="6" width="2" height="2"/><rect x="5.300" y="6" width="2" height="2"/><rect x="2" y="9" width="2" height="2"/><rect x="5.300" y="9" width="2" height="2"/><rect x="2" y="12" width="2" height="2"/><rect x="5.300" y="12" width="2" height="2"/><rect x="8.600" y="6" width="2" height="2"/></g><rect x="8.600" y="9" width="2" height="5" fill="#1f5fae"/></svg>
  <!-- folder -->
  <svg class="abs" style="left:121.500px;top:7.500px" width="17" height="15" viewBox="0 0 17 15"><path d="M0 1 Q0 0 1 0 H6 L7.500 2 H0 Z" fill="#e8a81f"/><path d="M0 2 H7.500 L9 1 H16 Q17 1 17 2 V13 Q17 14 16 14 H1 Q0 14 0 13 Z" fill="#f7c948"/><path d="M3.500 14.500 V9 Q3.500 8 4.500 8 H12.500 Q13.500 8 13.500 9 V14.500 H11 V10.500 H6 V14.500 Z" fill="#3c8be0"/></svg>
  <!-- remote desktop -->
  <svg class="abs" style="left:159px;top:7px" width="16" height="16" viewBox="0 0 16 16"><rect x="0.500" y="0.500" width="12.500" height="9.500" rx="0.800" fill="#c9cdd2"/><rect x="1.700" y="1.600" width="10.100" height="7.200" fill="#1432c8"/><path d="M1.700 8.800 L6 1.600 H9 L4.500 8.800 Z" fill="#2f62e8"/><rect x="5" y="10" width="3.500" height="2" fill="#9aa0a6"/><rect x="3" y="12" width="7.500" height="1.300" fill="#c9cdd2"/><circle cx="11.800" cy="11.500" r="4" fill="#e9ecef"/><circle cx="11.800" cy="11.500" r="3.200" fill="#f4f6f7"/><path d="M9.800 10.300 L11.200 11.500 L9.800 12.700 M13.800 10.300 L12.400 11.500 L13.800 12.700" fill="none" stroke="#1f8a2e" stroke-width="0.900"/></svg>
  <!-- H -->
  <svg class="abs" style="left:198px;top:7.500px" width="12" height="15" viewBox="0 0 12 15"><path d="M0 0 H12 L11 12.500 L6 14.500 L1 12.500 Z" fill="#1da237"/><path d="M3.300 3.500 V10.500 M8.700 3.500 V10.500 M3.300 7 H8.700" stroke="#e9f7ec" stroke-width="1.400" fill="none"/></svg>
  <!-- wechat -->
  <svg class="abs" style="left:233px;top:7px" width="16" height="16" viewBox="0 0 16 16"><rect x="0" y="0" width="16" height="16" rx="3.200" fill="#1fc760"/><ellipse cx="6.500" cy="6.500" rx="4.300" ry="3.600" fill="#dff7e8"/><path d="M3.500 9 L3 11 L5.200 9.800 Z" fill="#dff7e8"/><ellipse cx="10.300" cy="9.700" rx="3.600" ry="3" fill="#f4fcf7" stroke="#1fc760" stroke-width="0.700"/><path d="M12.200 12 L13 13.500 L10.800 12.600 Z" fill="#f4fcf7"/><circle cx="5" cy="5.600" r="0.600" fill="#1fc760"/><circle cx="8" cy="5.600" r="0.600" fill="#1fc760"/><circle cx="9.200" cy="9" r="0.500" fill="#1fc760"/><circle cx="11.500" cy="9" r="0.500" fill="#1fc760"/></svg>
  <svg class="abs" style="left:269.500px;top:7px" width="17" height="17" viewBox="0 0 48 48"><circle cx="24" cy="24" r="22" fill="#fff"/><path d="M24 2 A22 22 0 0 1 43.050 13 H24 A11 11 0 0 0 14.470 18.500 L4.950 13 A22 22 0 0 1 24 2 Z" fill="#ea4335"/><path d="M43.050 13 A22 22 0 0 1 24 46 L33.530 29.500 A11 11 0 0 0 33.530 18.500 L35 13 Z" fill="#fbbc04"/><path d="M24 46 A22 22 0 0 1 4.950 13 L14.470 29.500 A11 11 0 0 0 33.530 29.500 Z" fill="#34a853"/><path d="M4.950 13 L14.470 29.500 A11 11 0 0 1 14.470 18.500 Z" fill="#34a853"/><path d="M24 13 H43.050 A22 22 0 0 1 24 46 L33.530 29.500 A11 11 0 0 0 24 13 Z" fill="#fbbc04"/><circle cx="24" cy="24" r="10.500" fill="#fff"/><circle cx="24" cy="24" r="8.300" fill="#4285f4"/></svg>
  <svg class="abs" style="left:306.500px;top:7px" width="17" height="17" viewBox="0 0 48 48"><circle cx="24" cy="24" r="22" fill="#fff"/><path d="M24 2 A22 22 0 0 1 43.050 13 H24 A11 11 0 0 0 14.470 18.500 L4.950 13 A22 22 0 0 1 24 2 Z" fill="#ea4335"/><path d="M43.050 13 A22 22 0 0 1 24 46 L33.530 29.500 A11 11 0 0 0 33.530 18.500 L35 13 Z" fill="#fbbc04"/><path d="M24 46 A22 22 0 0 1 4.950 13 L14.470 29.500 A11 11 0 0 0 33.530 29.500 Z" fill="#34a853"/><path d="M4.950 13 L14.470 29.500 A11 11 0 0 1 14.470 18.500 Z" fill="#34a853"/><path d="M24 13 H43.050 A22 22 0 0 1 24 46 L33.530 29.500 A11 11 0 0 0 24 13 Z" fill="#fbbc04"/><circle cx="24" cy="24" r="10.500" fill="#fff"/><circle cx="24" cy="24" r="8.300" fill="#4285f4"/></svg>
  <!-- tray -->
  <svg class="abs" style="left:1156px;top:11px" width="13" height="8" viewBox="0 0 13 8"><path d="M0.600 7.400 L6.500 1.200 L12.400 7.400" fill="none" stroke="#fff" stroke-width="1.200"/></svg>
  <svg class="abs" style="left:1178px;top:9px" width="17" height="12" viewBox="0 0 17 12"><rect x="4.700" y="2.200" width="10.800" height="8.200" rx="0.800" fill="none" stroke="#fff" stroke-width="1.100"/><rect x="15.700" y="4.500" width="1.100" height="3.600" fill="#fff"/><path d="M1.200 0.300 V2.800 M3.600 0.300 V2.800" stroke="#fff" stroke-width="0.900"/><path d="M0.300 2.800 H4.500 V5 Q4.500 6.800 2.400 6.800 Q0.300 6.800 0.300 5 Z" fill="#fff"/><path d="M2.400 6.800 V8.500 Q2.400 9.500 4.700 9" fill="none" stroke="#fff" stroke-width="0.900"/></svg>
  <svg class="abs" style="left:1204.500px;top:9.500px" width="13" height="13" viewBox="0 0 13 13"><circle cx="10.800" cy="10.800" r="1.500" fill="#fff"/><path d="M6 12.300 A4.800 4.800 0 0 1 10.800 6" fill="none" stroke="#e8e8e8" stroke-width="1"/><path d="M3.300 12.300 A7.500 7.500 0 0 1 10.800 3.300" fill="none" stroke="#d0d0d0" stroke-width="1"/><path d="M0.600 12.300 A10.200 10.200 0 0 1 10.800 0.600" fill="none" stroke="#b8b8b8" stroke-width="1"/></svg>
  <svg class="abs" style="left:1226px;top:8px" width="17" height="14" viewBox="0 0 17 14"><path d="M0.600 4.700 H3.200 L6.600 1.200 V12.800 L3.200 9.300 H0.600 Z" fill="none" stroke="#fff" stroke-width="1.100" stroke-linejoin="round"/><path d="M8.800 4.800 Q10.200 7 8.800 9.200 M11 3 Q13.400 7 11 11 M13.300 1.200 Q16.600 7 13.300 12.800" fill="none" stroke="#fff" stroke-width="1.100"/></svg>
  <div class="abs" style="left:1248px;top:4.500px;font-size:15.500px;line-height:22px;color:#fff">英</div>
  <div class="abs" style="left:1275px;top:7px;font-size:12.200px;line-height:17px;color:#fff;white-space:nowrap;text-shadow:0 0 0.5px #fff">14:46</div>
  <svg class="abs" style="left:1325px;top:7px" width="16" height="16" viewBox="0 0 16 16"><path d="M0 0 H16 V12.500 H10 L8 15.500 L6 12.500 H0 Z" fill="#fff"/><path d="M3 3.500 H13 M3 6.500 H13 M3 9.500 H10" stroke="#20262e" stroke-width="1.400"/></svg>
  <div class="abs" style="left:1360.500px;top:0;width:1px;height:30px;background:#5a6068"></div>
</div>
</body>
</html>
